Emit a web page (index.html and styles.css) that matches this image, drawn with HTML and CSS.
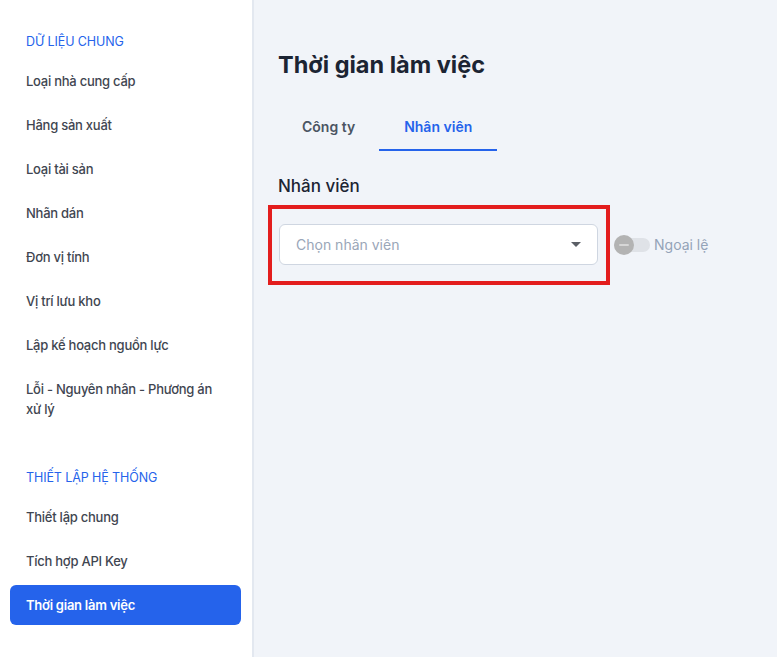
FILE: index.html
```html
<!DOCTYPE html>
<html lang="vi">
<head>
<meta charset="utf-8">
<title>Thời gian làm việc</title>
<link rel="stylesheet" href="styles.css">
</head>
<body>
<div class="app">
  <aside class="sidebar">
    <div class="section">
      <div class="section-title">DỮ LIỆU CHUNG</div>
      <a class="nav-item">Loại nhà cung cấp</a>
      <a class="nav-item">Hãng sản xuất</a>
      <a class="nav-item">Loại tài sản</a>
      <a class="nav-item">Nhãn dán</a>
      <a class="nav-item">Đơn vị tính</a>
      <a class="nav-item">Vị trí lưu kho</a>
      <a class="nav-item">Lập kế hoạch nguồn lực</a>
      <a class="nav-item">Lỗi - Nguyên nhân - Phương án xử lý</a>
    </div>
    <div class="section section-2">
      <div class="section-title">THIẾT LẬP HỆ THỐNG</div>
      <a class="nav-item">Thiết lập chung</a>
      <a class="nav-item">Tích hợp API Key</a>
      <a class="nav-item active">Thời gian làm việc</a>
    </div>
  </aside>
  <main class="main">
    <h1 class="title">Thời gian làm việc</h1>
    <div class="tabs">
      <div class="tab">Công ty</div>
      <div class="tab active">Nhân viên</div>
    </div>
    <h2 class="label">Nhân viên</h2>
    <div class="row">
      <div class="select-wrap">
        <div class="select">
          <span class="placeholder">Chọn nhân viên</span>
          <span class="caret"></span>
        </div>
        <div class="highlight"></div>
      </div>
      <div class="toggle">
        <span class="track"><span class="knob"><span class="knob-line"></span></span></span>
        <span class="toggle-label">Ngoại lệ</span>
      </div>
    </div>
  </main>
</div>
</body>
</html>
```
FILE: styles.css
```css
* { box-sizing: border-box; }
html, body { margin: 0; padding: 0; height: 100%; }
body {
  font-family: Inter, "Noto Sans", "Liberation Sans", sans-serif;
  background: #f1f4f9;
}
.app {
  display: flex;
  min-height: 657px;
}
.sidebar {
  width: 254px;
  flex: 0 0 254px;
  background: #ffffff;
  border-right: 2px solid #e3e8f0;
  padding-top: 34px;
}
.section {
  display: flex;
  flex-direction: column;
}
.section-title {
  font-size: 12.5px;
  line-height: 16px;
  color: #2563eb;
  letter-spacing: -0.1px;
  padding-left: 26px;
  margin-bottom: 9px;
  font-weight: 400;
}
.section-2 { margin-top: 39px; }
.nav-item {
  display: block;
  margin: 2px 11px 2px 10px;
  padding: 10px 20px 10px 16px;
  font-size: 13px;
  line-height: 20px;
  font-weight: 500;
  letter-spacing: -0.25px;
  color: #3f4651;
  border-radius: 6px;
}
.nav-item.active {
  background: #2563eb;
  color: #ffffff;
  font-weight: 600;
}
.main {
  flex: 1;
  padding: 50px 24px 0 24px;
}
.title {
  margin: 0;
  font-size: 23.5px;
  line-height: 30px;
  font-weight: 700;
  color: #1c2433;
}
.tabs {
  display: flex;
  margin-top: 25px;
}
.tab {
  padding: 12px 24px;
  font-size: 14px;
  line-height: 20px;
  font-weight: 600;
  color: #4b5563;
  border-bottom: 2px solid transparent;
}
.tab.active {
  color: #2563eb;
  border-bottom-color: #2563eb;
  padding: 12px 25px;
}
.label {
  margin: 23px 0 0 0;
  font-size: 17px;
  line-height: 24px;
  font-weight: 500;
  color: #1c2433;
}
.row {
  display: flex;
  align-items: center;
  margin-top: 26px;
}
.select-wrap {
  position: relative;
  margin-left: 1px;
}
.select {
  width: 319px;
  height: 41px;
  background: #ffffff;
  border: 1px solid #cfd6e1;
  border-radius: 6px;
  display: flex;
  align-items: center;
  justify-content: space-between;
  padding: 0 16px;
}
.placeholder {
  font-size: 14px;
  color: #9aa6b8;
}
.caret {
  width: 0;
  height: 0;
  border-left: 5px solid transparent;
  border-right: 5px solid transparent;
  border-top: 5px solid #5b5f66;
}
.highlight {
  position: absolute;
  left: -11px;
  top: -19px;
  width: 342px;
  height: 80px;
  border: 4px solid #e31d1d;
  pointer-events: none;
}
.toggle {
  display: flex;
  align-items: center;
  margin-left: 16px;
}
.track {
  position: relative;
  width: 36px;
  height: 14px;
  border-radius: 7px;
  background: #dfe2e7;
}
.knob {
  position: absolute;
  left: 0;
  top: -3px;
  width: 20px;
  height: 20px;
  border-radius: 50%;
  background: #b3b3b3;
  display: flex;
  align-items: center;
  justify-content: center;
}
.knob-line {
  width: 10px;
  height: 2px;
  background: #d6d6d6;
  border-radius: 1px;
}
.toggle-label {
  margin-left: 4px;
  font-size: 14px;
  color: #94a3b8;
}
```
